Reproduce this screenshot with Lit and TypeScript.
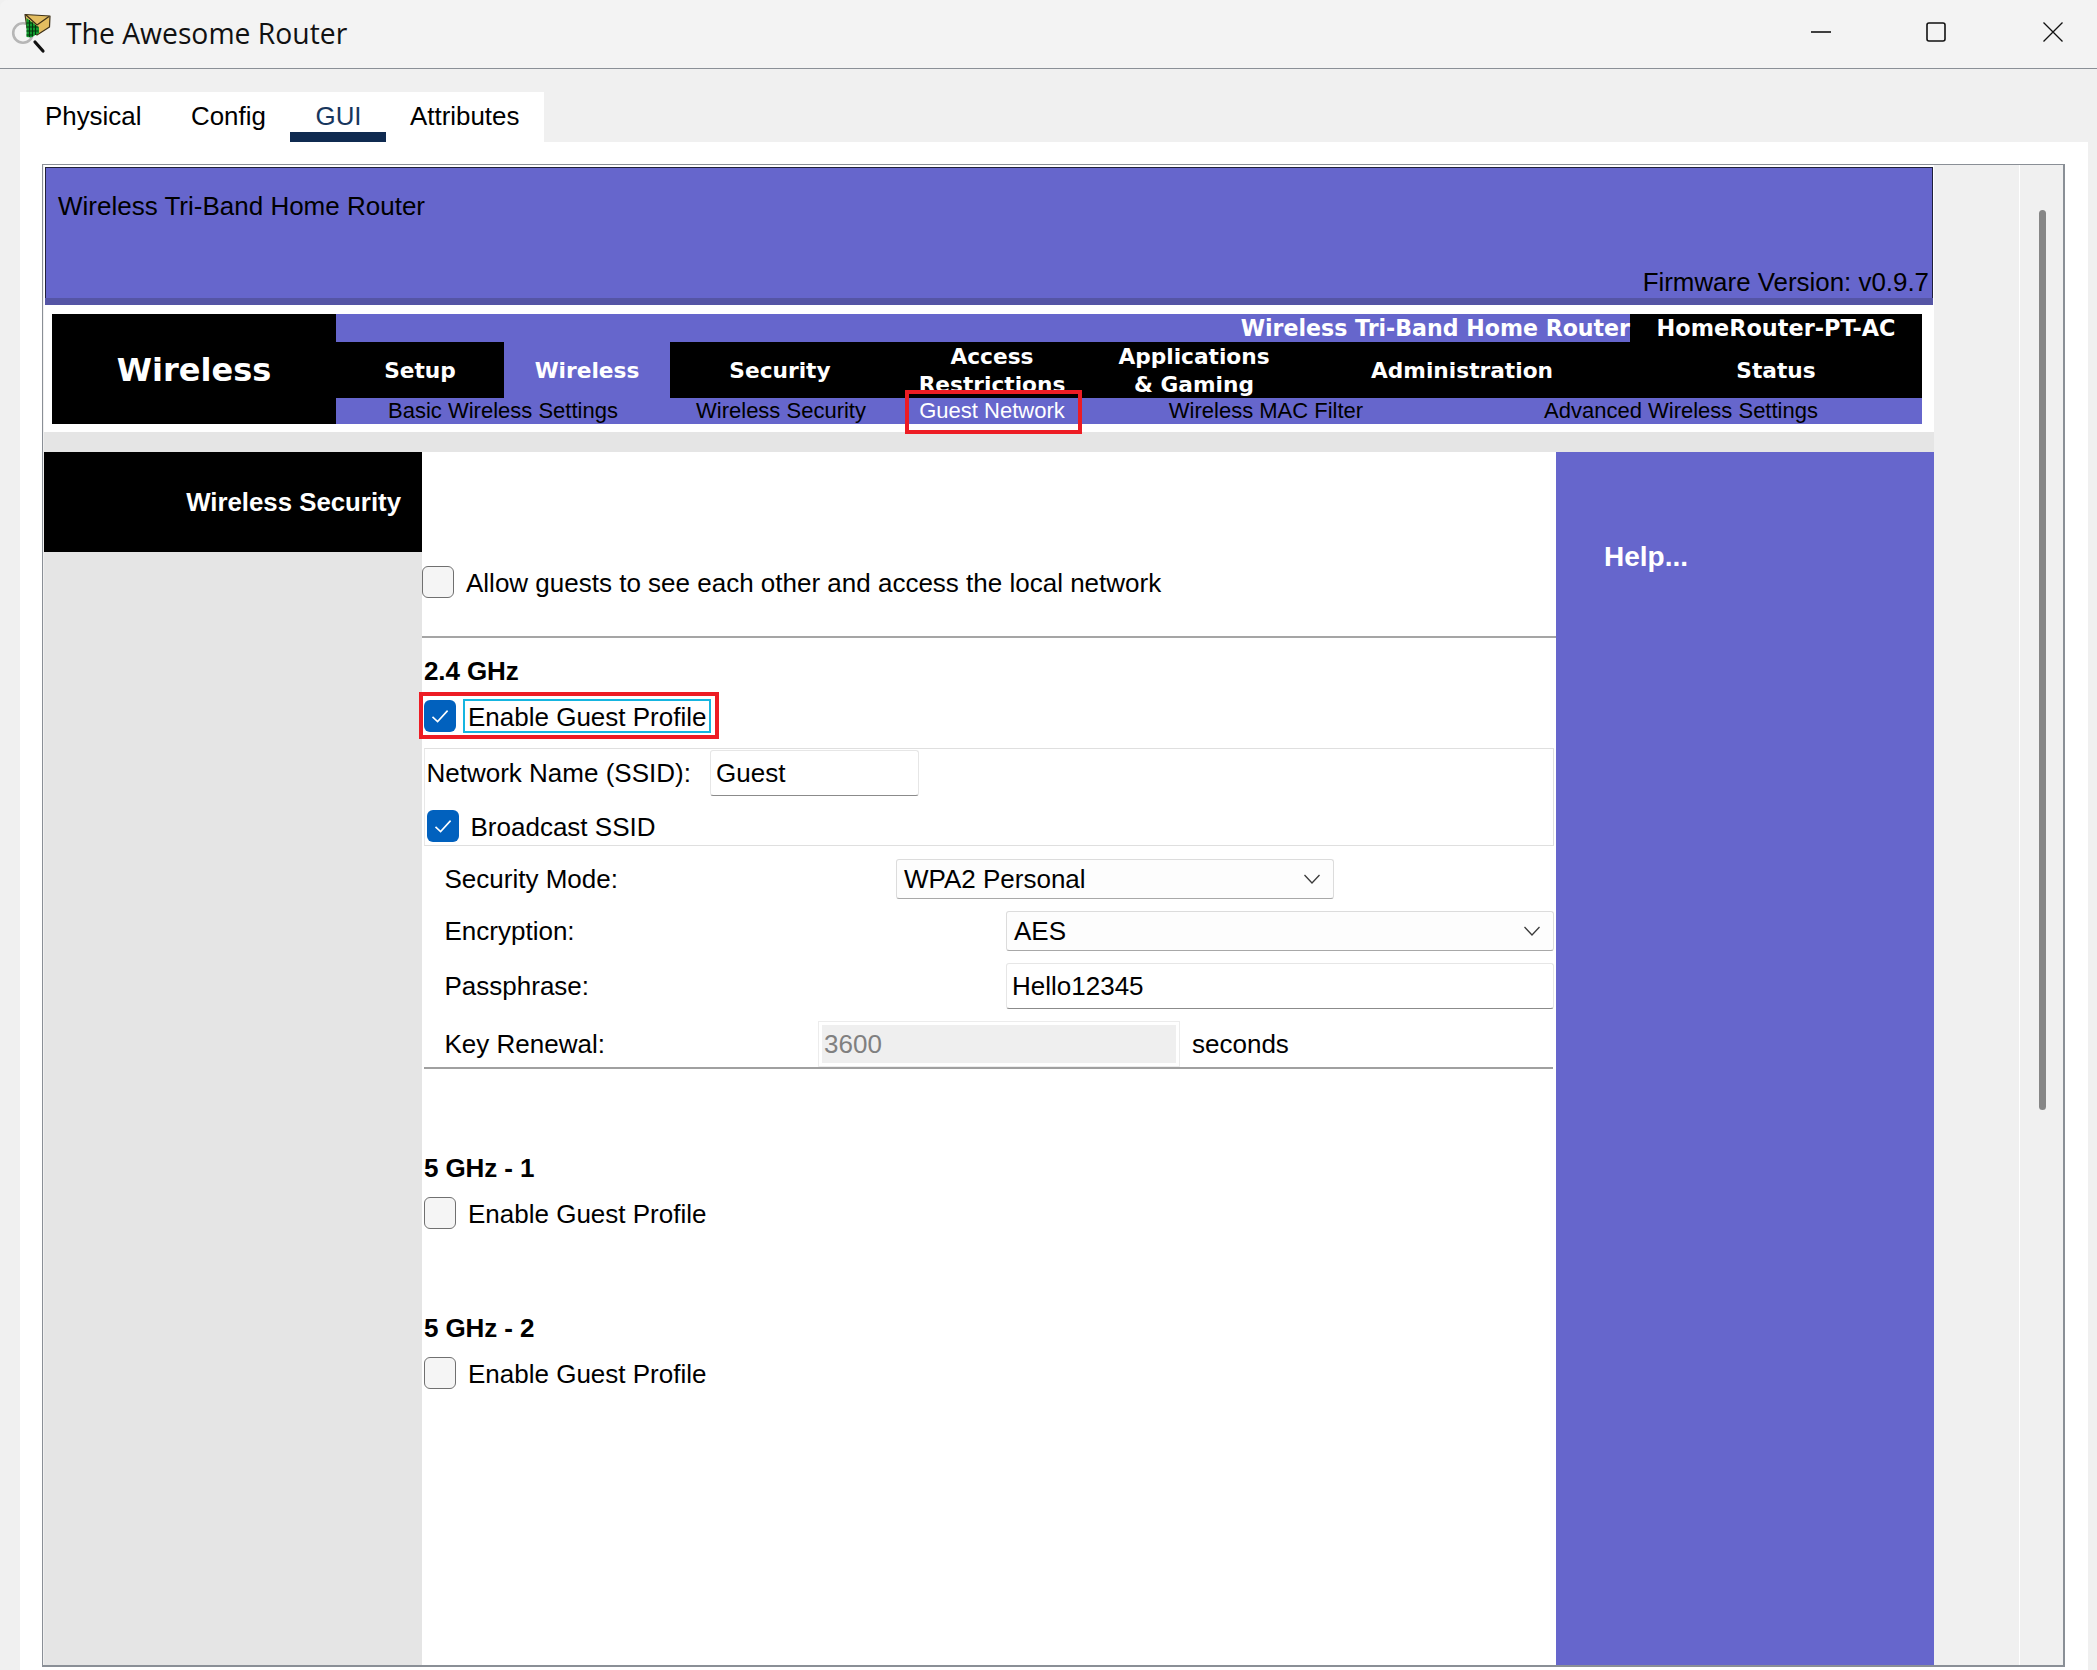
import { LitElement, html, css, svg } from "lit";
import { customElement } from "lit/decorators.js";

const checkMark = svg`<svg class="tick" viewBox="0 0 32 32"><path d="M8.5 16.8 L13.6 21.6 L23.6 10.6" fill="none" stroke="#fff" stroke-width="1.6"/></svg>`;
const chevron = svg`<svg class="chev" viewBox="0 0 18 12"><path d="M1.5 2 L9 10 L16.5 2" fill="none" stroke="#3a3a3a" stroke-width="1.3"/></svg>`;

@customElement("app-root")
export class AppRoot extends LitElement {
  static styles = css`
    :host { display: block; width: 2097px; height: 1670px; overflow: hidden; background: #dcdcdc;
      font-family: "Liberation Sans", Arial, sans-serif; color: #000; }
    * { box-sizing: border-box; }
    .win { background: #f0f0f0; height: 1670px; }
    .titlebar { height: 69px; background: #f3f3f3; border-bottom: 1px solid #8a8f96; border-top-left-radius: 8px;
      display: flex; align-items: center; }
    .appicon { width: 56px; height: 60px; flex: none; align-self: flex-start; margin-top: 4px; }
    .title { font-family: "Open Sans", sans-serif; font-size: 28.3px; margin-left: 10px; margin-top: -2px; color: #111; flex: 1; }
    .wbtns { display: flex; flex: none; align-items: center; margin-top: -4px; }
    .wbtns svg { display: block; width: 20px; height: 20px; }
    .wmin { margin-right: 95px; }
    .wmax { margin-right: 97px; }
    .wclose { margin-right: 34px; }

    .tabs { margin: 23px 0 0 20px; width: 524px; height: 50px; background: #fff; position: relative; }
    .tabs span { position: absolute; top: 9px; font-size: 25.9px; line-height: 30px; }
    .tabs .active { color: #17365d; }
    .tabs i { position: absolute; left: 270px; top: 40px; width: 96px; height: 10px; background: #0f2a50; }

    .content { margin-left: 20px; width: 2068px; height: 1528px; background: #fff; padding: 22px 0 0 22px; }
    .frame { width: 2023px; height: 1503px; border: 1px solid #8a8f96; border-bottom-width: 2px; border-right-width: 2px; background: #f0f0f0; display: flex; }
    .page { width: 1890px; margin-left: 1px; background: #fff; flex: none; display: flex; flex-direction: column; }
    .gutter { width: 86px; flex: none; border-right: 1px solid #fff; }
    .track { flex: 1; padding: 45px 0 0 18.5px; }
    .thumb { width: 7px; height: 900px; border-radius: 3.5px; background: #868686; }

    .head { height: 138px; margin: 2px 1px 0 1px; background: #6666cc; border: 1px solid #20203a; border-bottom: 0;
      display: flex; flex-direction: column; }
    .head .t1 { font-size: 26px; line-height: 30px; padding: 23px 0 0 12px; flex: 1; }
    .head .t2 { font-size: 25.9px; line-height: 30px; text-align: right; padding: 0 3px 1px 0; }
    .head .band { height: 7px; background: #5555a5; margin: 0 -1px; }

    .nav { margin: 9px 0 0 8px; width: 1870px; height: 110px; display: grid;
      grid-template-columns: 284px 168px 166px 220px 204px 200px 336px 292px;
      grid-template-rows: 28px 56px 26px;
      font-family: "DejaVu Sans", sans-serif; font-weight: 700; font-size: 21.7px; color: #fff; background: #000; }
    .nav > div { display: flex; align-items: center; justify-content: center; text-align: center; line-height: 28px; }
    .nav .cell { padding-top: 1.5px; }
    .nav .brand { grid-row: 1 / 4; font-size: 32px; padding-top: 1.5px; }
    .nav .top { grid-column: 2 / 8; background: #6666cc; justify-content: flex-end; white-space: nowrap; font-size: 22.1px; }
    .nav .model { white-space: nowrap; font-size: 22.4px; }
    .nav .on { background: #6666cc; }
    .nav .subs { grid-column: 2 / 9; background: #6666cc; display: grid; grid-template-columns: 334px 222px 200px 348px 482px;
      font-family: "Liberation Sans", sans-serif; font-weight: 400; font-size: 22px; color: #000; white-space: nowrap; text-align: center; }
    .subs span { display: block; line-height: 24px; position: relative; }
    .subs .cur { color: #fff; }
    .redsub { position: absolute; left: 12.5px; top: -9px; width: 177px; height: 44px; border: 4.5px solid #ed1c24; }

    .strip { height: 20px; margin-top: 8px; background: #e5e5e5; }
    .main { flex: 1; display: flex; min-height: 0; }
    .side { width: 378px; flex: none; background: #e5e5e5; }
    .sidehead { height: 100px; background: #000; color: #fff; font-weight: 700; font-size: 25.8px; text-align: right;
      padding: 34px 21px 0 0; line-height: 32px; }
    .center { width: 1134px; flex: none; }
    .help { flex: 1; background: #6666cc; color: #fff; font-weight: 700; font-size: 28px; line-height: 32px; padding: 89px 0 0 48px; }

    .box { width: 32px; height: 32px; flex: none; border-radius: 6px; border: 1.5px solid #707070; background: #f5f5f5; }
    .box.on { background: #0161be; border: 0; }
    .tick { display: block; width: 32px; height: 32px; }
    .line { display: flex; align-items: center; font-size: 26px; line-height: 32px; white-space: nowrap; }
    .txt { padding-top: 2px; }

    .allow { margin-top: 114px; height: 32px; }
    .allow .txt { margin-left: 12px; }
    .rule1 { height: 2px; background: #a5a5a5; margin-top: 38px; }
    h3 { margin: 0; font-size: 26px; line-height: 30px; font-weight: 700; padding-left: 2px; letter-spacing: -0.1px; }
    .h24 { margin-top: 17px; padding-top: 1px; height: 30px; }
    .enable { margin-top: 14px; padding-left: 2px; position: relative; height: 34px; }
    .focus { margin-left: 7px; height: 34px; width: 248px; border: 2px solid #15b5e0; padding-left: 3px; line-height: 32px; }
    .redbox { position: absolute; left: -3px; top: -7px; width: 300px; height: 47px; border: 4.3px solid #ed1c24; }
    .group { margin: 15px 0 0 2px; width: 1130px; height: 98px; border: 1px solid #dfdfdf; border-left-color: #e8e8e8; padding: 1px 0 0 1.5px; }
    .netrow { height: 46px; }
    .netrow .lbl { width: 283.5px; }
    .field { border: 1px solid #e6e6e6; border-bottom: 1.5px solid #8b8b8b; border-radius: 3px; background: #fff;
      font-size: 26px; line-height: 30px; display: flex; align-items: center; }
    .ssid { width: 209px; height: 46px; padding-left: 5px; }
    .bcast { margin-top: 14px; height: 32px; padding-left: 0.5px; }
    .bcast .txt { margin-left: 11.5px; }
    .form { padding-left: 22.5px; }
    .frow { display: flex; align-items: center; }
    .frow .lbl { flex: none; }
    .select { height: 40px; padding: 0 12px 0 7px; justify-content: space-between; background: #fdfdfd; border-color: #dcdcdc; border-bottom-color: #a8a8a8; }
    .chev { width: 18px; height: 12px; display: block; }
    .r-sec { margin-top: 13px; } .r-sec .lbl { width: 451.5px; } .r-sec .select { width: 438px; }
    .r-enc { margin-top: 12px; } .r-enc .lbl { width: 561.5px; } .r-enc .select { width: 548px; }
    .r-pass { margin-top: 12px; } .r-pass .lbl { width: 561.5px; } .r-pass .field { width: 548px; height: 46px; padding-left: 5px; }
    .r-key { margin-top: 12px; } .r-key .lbl { width: 373.5px; }
    .dis { width: 362px; height: 46px; border: 1px solid #ececec; padding: 3px; flex: none; }
    .dis div { background: #efefef; height: 38px; color: #808080; font-size: 26px; line-height: 38px; padding-left: 2px; }
    .r-key .sec { font-size: 26px; margin-left: 12px; }
    .rule2 { height: 2px; margin-left: 2px; width: 1129px; background: #a0a0a0; margin-top: 0; }
    .h5a { margin-top: 84px; }
    .gp { margin-top: 14px; padding-left: 2px; height: 32px; }
    .gp .txt { margin-left: 12px; }
    .h5b { margin-top: 84px; }
  `;

  private box(on: boolean) {
    return html`<div class="box ${on ? "on" : ""}">${on ? checkMark : ""}</div>`;
  }

  render() {
    return html`
      <div class="win">
        <div class="titlebar">
          <svg class="appicon" viewBox="0 4 56 60">
            <circle cx="23" cy="33" r="9.8" fill="#f4f4f4" stroke="#b6b6b6" stroke-width="2.6"/>
            <path d="M35 42 L43 51" stroke="#111" stroke-width="3.2" fill="none" stroke-linecap="round"/>
            <path d="M25 14.5 L50 16 L49.5 27 L37 35 L27 28 Z" fill="#e3bd60" stroke="#3d3018" stroke-width="1.2" stroke-linejoin="round"/>
            <path d="M26 15 L37 25 L49 16.5" fill="none" stroke="#3d3018" stroke-width="1.3"/>
            <path d="M26.5 18 L39 27.5 L39 33 L31 37.5 L26.5 37 Z" fill="#0f9a2d"/>
            <path d="M29.5 20v17M32.5 22.5v14M35.5 25v10M26.5 23h6M26.5 27h12M26.5 31h12M26.5 35h6" stroke="#06350f" stroke-width="1" fill="none"/>
          </svg>
          <div class="title">The Awesome Router</div>
          <div class="wbtns">
            <svg class="wmin" viewBox="0 0 20 20"><path d="M0 10h20" stroke="#111" stroke-width="1.6"/></svg>
            <svg class="wmax" viewBox="0 0 20 20"><rect x="1" y="1" width="18" height="18" rx="2" fill="none" stroke="#111" stroke-width="1.6"/></svg>
            <svg class="wclose" viewBox="0 0 20 20"><path d="M0.5 0.5 L19.5 19.5 M19.5 0.5 L0.5 19.5" stroke="#111" stroke-width="1.3"/></svg>
          </div>
        </div>

        <div class="tabs">
          <span style="left:25px">Physical</span>
          <span style="left:171px">Config</span>
          <span class="active" style="left:295.5px">GUI</span>
          <span style="left:390px">Attributes</span>
          <i></i>
        </div>

        <div class="content">
          <div class="frame">
            <div class="page">
              <div class="head">
                <div class="t1">Wireless Tri-Band Home Router</div>
                <div class="t2">Firmware Version: v0.9.7</div>
                <div class="band"></div>
              </div>

              <div class="nav">
                <div class="brand">Wireless</div>
                <div class="top">Wireless Tri-Band Home Router</div>
                <div class="model">HomeRouter-PT-AC</div>
                <div class="cell">Setup</div>
                <div class="cell on">Wireless</div>
                <div class="cell">Security</div>
                <div class="cell">Access<br />Restrictions</div>
                <div class="cell">Applications<br />&amp; Gaming</div>
                <div class="cell">Administration</div>
                <div class="cell">Status</div>
                <div class="subs">
                  <span>Basic Wireless Settings</span>
                  <span>Wireless Security</span>
                  <span class="cur">Guest Network<b class="redsub"></b></span>
                  <span>Wireless MAC Filter</span>
                  <span>Advanced Wireless Settings</span>
                </div>
              </div>

              <div class="strip"></div>

              <div class="main">
                <div class="side"><div class="sidehead">Wireless Security</div></div>
                <div class="center">
                  <div class="line allow">${this.box(false)}<span class="txt">Allow guests to see each other and access the local network</span></div>
                  <div class="rule1"></div>
                  <h3 class="h24">2.4 GHz</h3>
                  <div class="line enable">
                    ${this.box(true)}
                    <div class="focus">Enable Guest Profile</div>
                    <div class="redbox"></div>
                  </div>
                  <div class="group">
                    <div class="line netrow">
                      <span class="lbl">Network Name (SSID):</span>
                      <div class="field ssid">Guest</div>
                    </div>
                    <div class="line bcast">${this.box(true)}<span class="txt">Broadcast SSID</span></div>
                  </div>
                  <div class="form">
                    <div class="line frow r-sec">
                      <span class="lbl">Security Mode:</span>
                      <div class="field select"><span>WPA2 Personal</span>${chevron}</div>
                    </div>
                    <div class="line frow r-enc">
                      <span class="lbl">Encryption:</span>
                      <div class="field select"><span>AES</span>${chevron}</div>
                    </div>
                    <div class="line frow r-pass">
                      <span class="lbl">Passphrase:</span>
                      <div class="field">Hello12345</div>
                    </div>
                    <div class="line frow r-key">
                      <span class="lbl">Key Renewal:</span>
                      <div class="dis"><div>3600</div></div>
                      <span class="sec">seconds</span>
                    </div>
                  </div>
                  <div class="rule2"></div>
                  <h3 class="h5a">5 GHz - 1</h3>
                  <div class="line gp">${this.box(false)}<span class="txt">Enable Guest Profile</span></div>
                  <h3 class="h5b">5 GHz - 2</h3>
                  <div class="line gp">${this.box(false)}<span class="txt">Enable Guest Profile</span></div>
                </div>
                <div class="help">Help...</div>
              </div>
            </div>
            <div class="gutter"></div>
            <div class="track"><div class="thumb"></div></div>
          </div>
        </div>
      </div>
    `;
  }
}
